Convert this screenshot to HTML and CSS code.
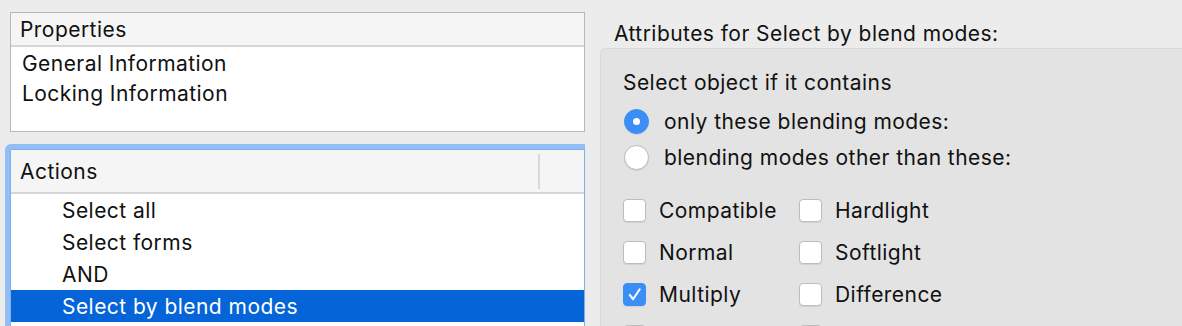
FILE: index.html
```html
<!DOCTYPE html>
<html lang="en">
<head>
  <meta charset="UTF-8" />
  <title>Select by blend modes</title>
  <link rel="stylesheet" href="styles.css">
</head>
<body>

  <div class="left-col">
    <!-- Properties list -->
    <div class="list props">
      <div class="list-head">Properties</div>
      <div class="list-body">
        <div class="row">General Information</div>
        <div class="row">Locking Information</div>
      </div>
    </div>

    <!-- Actions list (focused) -->
    <div class="list actions">
      <div class="list-head">
        <span>Actions</span>
        <span class="col-split"></span>
      </div>
      <div class="list-body">
        <div class="row">Select all</div>
        <div class="row">Select forms</div>
        <div class="row">AND</div>
        <div class="row selected">Select by blend modes</div>
      </div>
    </div>
  </div>

  <div class="right-col">
    <div class="attr-title">Attributes for Select by blend modes:</div>
    <div class="group">
      <div class="group-label">Select object if it contains</div>
      <div class="radios">
        <label class="radio"><span class="radio-dot on"></span>only these blending modes:</label>
        <label class="radio"><span class="radio-dot"></span>blending modes other than these:</label>
      </div>
      <div class="checks">
        <label class="check"><span class="box"></span>Compatible</label>
        <label class="check"><span class="box"></span>Hardlight</label>
        <label class="check"><span class="box"></span>Normal</label>
        <label class="check"><span class="box"></span>Softlight</label>
        <label class="check"><span class="box on">
          <svg viewBox="0 0 20 20" aria-hidden="true"><path d="M5 10.5l3.5 4.5L15.5 4.5"/></svg>
        </span>Multiply</label>
        <label class="check"><span class="box"></span>Difference</label>
        <!-- next row only peeks in at the bottom edge -->
        <label class="check"><span class="box"></span></label>
        <label class="check"><span class="box"></span></label>
      </div>
    </div>
  </div>

</body>
</html>
```

FILE: styles.css
```css
html,
body {
  height: 326px;
  overflow: hidden;
}

body {
  margin: 0;
  background: #ececec;
  font-family: Inter, 'Noto Sans', sans-serif;
  font-size: 21px;
  letter-spacing: 0.45px;
  color: #111;
  display: flex;
}

.left-col {
  width: 585px;
  height: 326px;
  overflow: hidden;
  padding: 12px 0 0 10px;
  box-sizing: border-box;
  display: flex;
  flex-direction: column;
  gap: 17px;
}

.list {
  background: white;
  border: 1px solid #b8b8b8;
}

.list-head {
  background: #f5f5f5;
  border-bottom: 2px solid #d6d6d6;
  padding-left: 9px;
  display: flex;
  align-items: center;
}

.props .list-head {
  height: 32px;
}

.props .list-body {
  height: 82px;
  padding-top: 2px;
}

.props .row {
  height: 30px;
  line-height: 30px;
  padding-left: 11px;
}

.actions {
  border-color: #7fb0ee;
  border-radius: 2px;
  box-shadow: 0 0 0 5px #93bef5;
  flex: 0 0 200px;
}

.actions .list-head {
  height: 42px;
  justify-content: space-between;
}

.col-split {
  width: 2px;
  height: 35px;
  background: #d9d9d9;
  margin-right: 44px;
}

.actions .row {
  height: 32px;
  line-height: 34px;
  padding-left: 51px;
}

.row.selected {
  background: #0464d8;
  color: white;
}

.right-col {
  flex: 1;
  height: 326px;
  overflow: hidden;
  padding: 20px 0 0 15px;
  box-sizing: border-box;
}

.attr-title {
  padding-left: 14px;
  height: 28px;
  line-height: 28px;
}

.group {
  background: #e3e3e3;
  border: 1px solid #d8d8d8;
  border-right: none;
  border-radius: 6px 0 0 0;
  height: 300px;
  padding: 21px 0 0 22px;
}

.group-label {
  line-height: 26px;
}

.radios {
  margin-top: 13px;
  display: flex;
  flex-direction: column;
  gap: 12px;
  margin-left: 1px;
}

.radio,
.check {
  display: flex;
  align-items: center;
  gap: 15px;
  height: 24px;
}

.radio-dot {
  width: 23px;
  height: 23px;
  border-radius: 50%;
  background: white;
  border: 1px solid #b9b9b9;
  box-shadow: 0 1px 1px rgba(0, 0, 0, 0.08);
  display: flex;
  align-items: center;
  justify-content: center;
}

.radio-dot.on {
  background: #3a8ef6;
  border-color: #3a8ef6;
}

.radio-dot.on::after {
  content: '';
  width: 7px;
  height: 7px;
  border-radius: 50%;
  background: white;
}

.checks {
  margin-top: 29px;
  display: grid;
  grid-template-columns: 176px 180px;
  row-gap: 18px;
}

.box {
  width: 21px;
  height: 21px;
  border-radius: 4px;
  background: white;
  border: 1px solid #bdbdbd;
  box-shadow: 0 1px 1px rgba(0, 0, 0, 0.08);
  display: flex;
  align-items: center;
  justify-content: center;
  margin-right: -2px;
}

.box.on {
  background: #3a8ef6;
  border-color: #3a8ef6;
}

.box svg {
  width: 19px;
  height: 19px;
  fill: none;
  stroke: white;
  stroke-width: 2.2;
  stroke-linecap: round;
  stroke-linejoin: round;
}
```
